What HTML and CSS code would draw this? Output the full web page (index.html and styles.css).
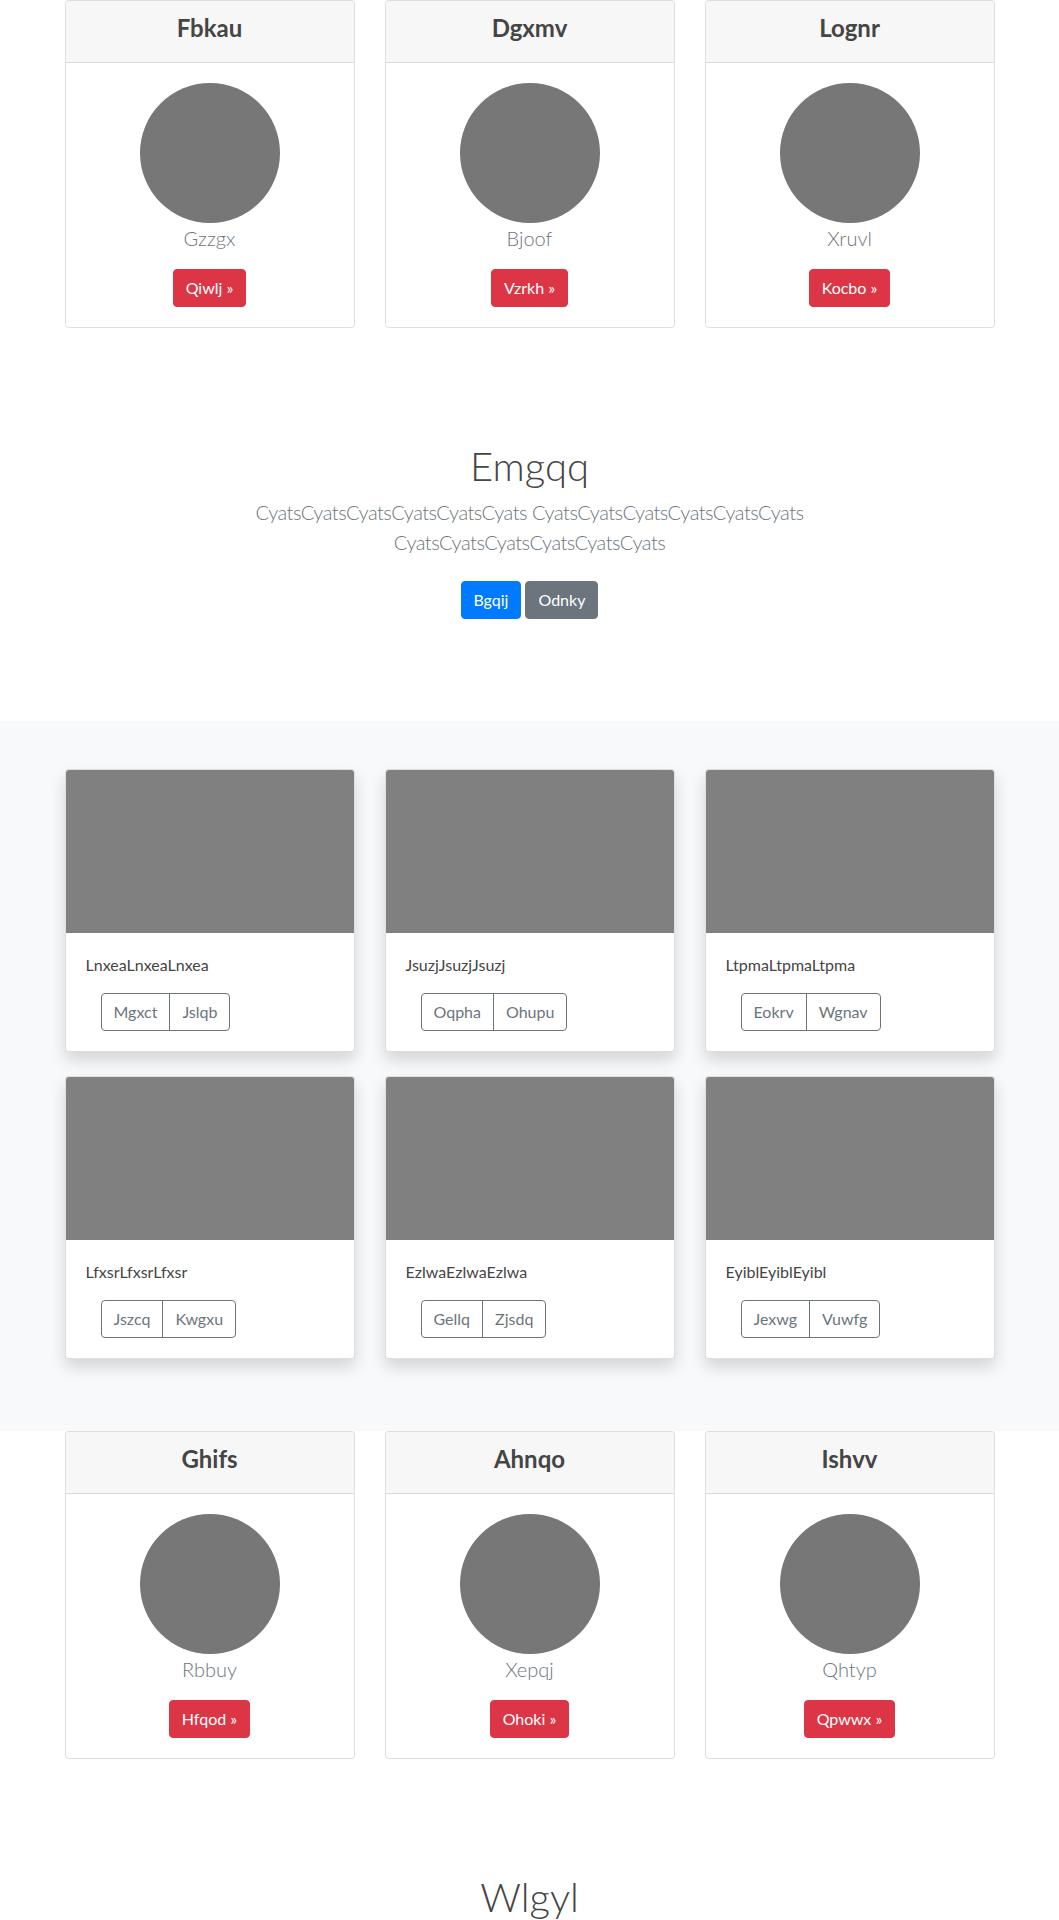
FILE: index.html
```html
<!DOCTYPE html>
<html lang="en">
<head>
<meta charset="utf-8">
<title>Team</title>
<link rel="stylesheet" href="styles.css">
</head>
<body>
<section class="team">
  <div class="container grid3">
    <div class="pcard">
      <div class="pcard-header"><h4>Fbkau</h4></div>
      <div class="pcard-body">
        <div class="avatar"></div>
        <p class="name">Gzzgx</p>
        <a class="btn btn-danger" href="#">Qiwlj »</a>
      </div>
    </div>
    <div class="pcard">
      <div class="pcard-header"><h4>Dgxmv</h4></div>
      <div class="pcard-body">
        <div class="avatar"></div>
        <p class="name">Bjoof</p>
        <a class="btn btn-danger" href="#">Vzrkh »</a>
      </div>
    </div>
    <div class="pcard">
      <div class="pcard-header"><h4>Lognr</h4></div>
      <div class="pcard-body">
        <div class="avatar"></div>
        <p class="name">Xruvl</p>
        <a class="btn btn-danger" href="#">Kocbo »</a>
      </div>
    </div>
  </div>
</section>

<section class="hero">
  <div class="hero-inner">
    <h1>Emgqq</h1>
    <p class="lead">CyatsCyatsCyatsCyatsCyatsCyats CyatsCyatsCyatsCyatsCyatsCyats CyatsCyatsCyatsCyatsCyatsCyats</p>
    <p class="actions"><a class="btn btn-primary" href="#">Bgqij</a><a class="btn btn-secondary" href="#">Odnky</a></p>
  </div>
</section>

<section class="album">
  <div class="container grid3 album-grid">
    <div class="acard">
      <div class="acard-img"></div>
      <div class="acard-body">
        <p class="acard-text">LnxeaLnxeaLnxea</p>
        <div class="btn-group"><a class="btn btn-outline" href="#">Mgxct</a><a class="btn btn-outline" href="#">Jslqb</a></div>
      </div>
    </div>
    <div class="acard">
      <div class="acard-img"></div>
      <div class="acard-body">
        <p class="acard-text">JsuzjJsuzjJsuzj</p>
        <div class="btn-group"><a class="btn btn-outline" href="#">Oqpha</a><a class="btn btn-outline" href="#">Ohupu</a></div>
      </div>
    </div>
    <div class="acard">
      <div class="acard-img"></div>
      <div class="acard-body">
        <p class="acard-text">LtpmaLtpmaLtpma</p>
        <div class="btn-group"><a class="btn btn-outline" href="#">Eokrv</a><a class="btn btn-outline" href="#">Wgnav</a></div>
      </div>
    </div>
    <div class="acard">
      <div class="acard-img"></div>
      <div class="acard-body">
        <p class="acard-text">LfxsrLfxsrLfxsr</p>
        <div class="btn-group"><a class="btn btn-outline" href="#">Jszcq</a><a class="btn btn-outline" href="#">Kwgxu</a></div>
      </div>
    </div>
    <div class="acard">
      <div class="acard-img"></div>
      <div class="acard-body">
        <p class="acard-text">EzlwaEzlwaEzlwa</p>
        <div class="btn-group"><a class="btn btn-outline" href="#">Gellq</a><a class="btn btn-outline" href="#">Zjsdq</a></div>
      </div>
    </div>
    <div class="acard">
      <div class="acard-img"></div>
      <div class="acard-body">
        <p class="acard-text">EyiblEyiblEyibl</p>
        <div class="btn-group"><a class="btn btn-outline" href="#">Jexwg</a><a class="btn btn-outline" href="#">Vuwfg</a></div>
      </div>
    </div>
  </div>
</section>

<section class="team">
  <div class="container grid3">
    <div class="pcard">
      <div class="pcard-header"><h4>Ghifs</h4></div>
      <div class="pcard-body">
        <div class="avatar"></div>
        <p class="name">Rbbuy</p>
        <a class="btn btn-danger" href="#">Hfqod »</a>
      </div>
    </div>
    <div class="pcard">
      <div class="pcard-header"><h4>Ahnqo</h4></div>
      <div class="pcard-body">
        <div class="avatar"></div>
        <p class="name">Xepqj</p>
        <a class="btn btn-danger" href="#">Ohoki »</a>
      </div>
    </div>
    <div class="pcard">
      <div class="pcard-header"><h4>Ishvv</h4></div>
      <div class="pcard-body">
        <div class="avatar"></div>
        <p class="name">Qhtyp</p>
        <a class="btn btn-danger" href="#">Qpwwx »</a>
      </div>
    </div>
  </div>
</section>

<section class="hero hero-last">
  <div class="hero-inner">
    <h1>Wlgyl</h1>
  </div>
</section>
</body>
</html>
```

FILE: styles.css
```css
* {
  box-sizing: border-box;
}

body {
  margin: 0;
  font-family: "Segoe UI", Lato, "Noto Sans", sans-serif;
  font-size: 16px;
  line-height: 1.5;
  color: #212529;
  background: #fff;
}

.container {
  width: 930px;
  margin: 0 auto;
}

.grid3 {
  display: grid;
  grid-template-columns: repeat(3, 1fr);
  column-gap: 30px;
}

/* team cards */
.team {
  padding-bottom: 31px;
}

.pcard {
  background: #fff;
  border: 1px solid rgba(0, 0, 0, 0.125);
  border-radius: 4px;
}

.pcard-header {
  background: #f7f7f7;
  border-bottom: 1px solid rgba(0, 0, 0, 0.125);
  border-radius: 3px 3px 0 0;
  padding: 13px 20px 11px;
  text-align: center;
}

.pcard-header h4 {
  margin: 0 0 8px;
  font-size: 24px;
  line-height: 1.2;
  font-weight: 700;
  color: #454545;
}

.pcard-body {
  padding: 20px;
  text-align: center;
}

.avatar {
  width: 140px;
  height: 140px;
  border-radius: 50%;
  background: #777;
  margin: 0 auto;
}

.name {
  margin: 0 0 16px;
  font-size: 20px;
  line-height: 30px;
  font-weight: 300;
  color: #6c757d;
}

/* buttons */
.btn {
  display: inline-block;
  font-size: 16px;
  line-height: 24px;
  padding: 6px 12px;
  border: 1px solid transparent;
  border-radius: 4px;
  text-decoration: none;
  color: #fff;
  white-space: nowrap;
}

.btn-danger {
  background: #dc3545;
  border-color: #dc3545;
}

.btn-primary {
  background: #007bff;
  border-color: #007bff;
}

.btn-secondary {
  background: #6c757d;
  border-color: #6c757d;
}

.btn-outline {
  color: #6c757d;
  border-color: #6c757d;
  background: transparent;
}

/* hero */
.hero {
  padding: 81px 0 78px;
  text-align: center;
}

.hero-inner {
  max-width: 610px;
  margin: 0 auto;
}

.hero h1 {
  margin: 0 0 7px;
  padding-top: 2px;
  font-size: 40px;
  line-height: 48px;
  font-weight: 300;
  color: #454545;
}

.lead {
  margin: 0 0 16px;
  font-size: 20px;
  line-height: 30px;
  font-weight: 300;
  color: #6c757d;
  letter-spacing: -0.5px;
}

.actions {
  margin: 0 0 16px;
  display: flex;
  justify-content: center;
  gap: 4px;
}

.actions .btn {
  margin: 8px 0;
}

.hero-last {
  padding-bottom: 40px;
}

/* album */
.album {
  background: #f8f9fa;
  padding: 48px 0 72px;
}

.album-grid {
  row-gap: 24px;
}

.acard {
  background: #fff;
  border: 1px solid rgba(0, 0, 0, 0.125);
  border-radius: 4px;
  box-shadow: 0 8px 16px rgba(0, 0, 0, 0.15);
  overflow: hidden;
}

.acard-img {
  height: 163px;
  background: #808080;
}

.acard-body {
  padding: 20px;
}

.acard-text {
  margin: 0 0 16px;
  color: #454545;
}

.btn-group {
  display: inline-flex;
  margin-left: 15px;
}

.btn-group .btn:first-child {
  border-radius: 4px 0 0 4px;
}

.btn-group .btn + .btn {
  margin-left: -1px;
  border-radius: 0 4px 4px 0;
}
```
